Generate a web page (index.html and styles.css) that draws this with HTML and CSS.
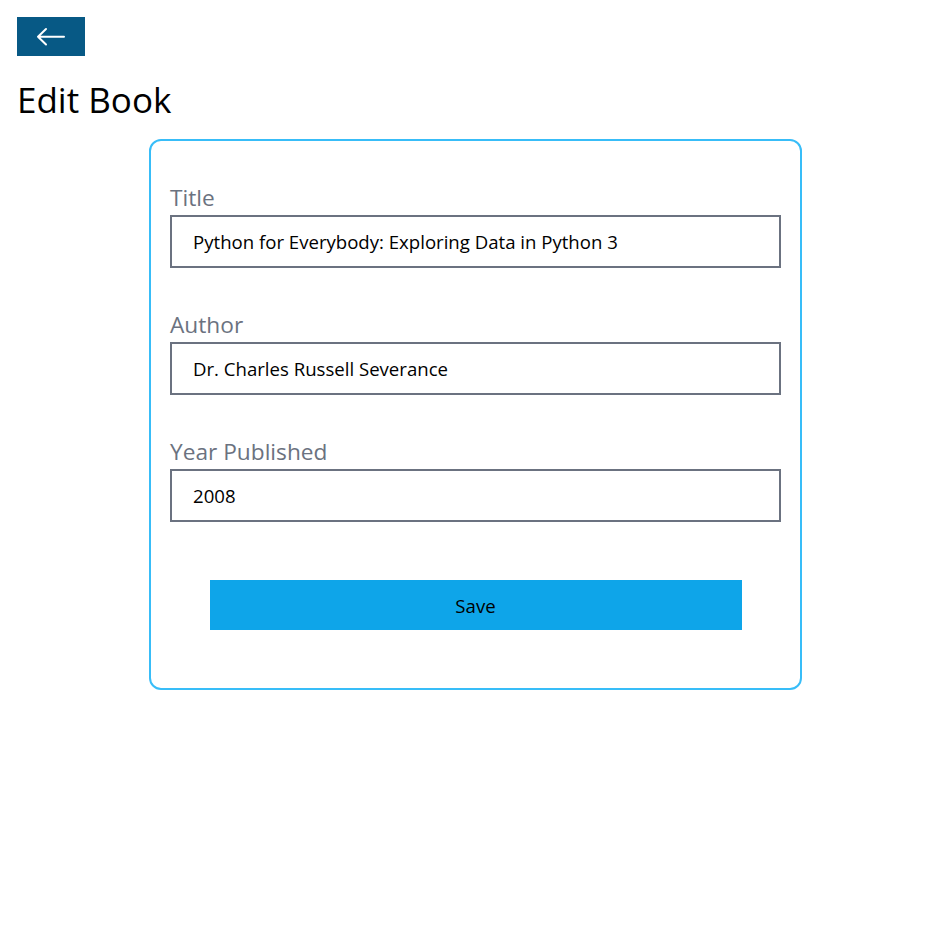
FILE: index.html
```html
<!DOCTYPE html>
<html lang="en">
<head>
<meta charset="utf-8">
<title>Edit Book</title>
<link rel="stylesheet" href="styles.css">
</head>
<body>
<div class="page">
  <a class="back-btn" href="#" aria-label="Back">
    <svg width="68" height="39" viewBox="0 0 68 39" aria-hidden="true">
      <path d="M21 19.7H47 M29 12 L21 19.7 L29 27.5" fill="none" stroke="#ffffff" stroke-width="2" stroke-linecap="round" stroke-linejoin="round"/>
    </svg>
  </a>
  <h1 class="page-title">Edit Book</h1>
  <form class="card">
    <div class="field">
      <label class="field-label" for="title">Title</label>
      <input class="field-input" id="title" type="text" value="Python for Everybody: Exploring Data in Python 3">
    </div>
    <div class="field">
      <label class="field-label" for="author">Author</label>
      <input class="field-input" id="author" type="text" value="Dr. Charles Russell Severance">
    </div>
    <div class="field">
      <label class="field-label" for="year">Year Published</label>
      <input class="field-input" id="year" type="text" value="2008">
    </div>
    <button class="save-btn" type="button">Save</button>
  </form>
</div>
</body>
</html>
```

FILE: styles.css
```css
* { box-sizing: border-box; }
html, body { margin: 0; padding: 0; background: #ffffff; }
body {
  font-family: "Open Sans", "Noto Sans", "Liberation Sans", sans-serif;
  color: #000000;
}
.page {
  padding: 17px 8px 17px 17px;
}
.back-btn {
  display: flex;
  width: 68px;
  height: 39px;
  background: #075985;
}
.back-btn svg { display: block; }
.page-title {
  margin: 20px 0 0 0;
  font-size: 35px;
  line-height: 48px;
  font-weight: 400;
}
.card {
  margin: 15px 0 0 132px;
  width: 653px;
  border: 2px solid #38bdf8;
  border-radius: 12px;
  padding: 41px 19px 58px 19px;
  display: flex;
  flex-direction: column;
  gap: 41px;
}
.field {
  display: flex;
  flex-direction: column;
}
.field-label {
  font-size: 22.7px;
  line-height: 32px;
  height: 33px;
  color: #6b7280;
}
.field-input {
  height: 53px;
  border: 2px solid #6b7280;
  border-radius: 0;
  padding: 0 0 0 21px;
  font-family: inherit;
  font-size: 18.6px;
  color: #000000;
  background: #ffffff;
  outline: none;
}
.save-btn {
  align-self: center;
  width: 532px;
  height: 50px;
  margin-top: 17px;
  border: none;
  border-radius: 0;
  background: #0ea5e9;
  font-family: inherit;
  font-size: 18.6px;
  color: #000000;
}
```
